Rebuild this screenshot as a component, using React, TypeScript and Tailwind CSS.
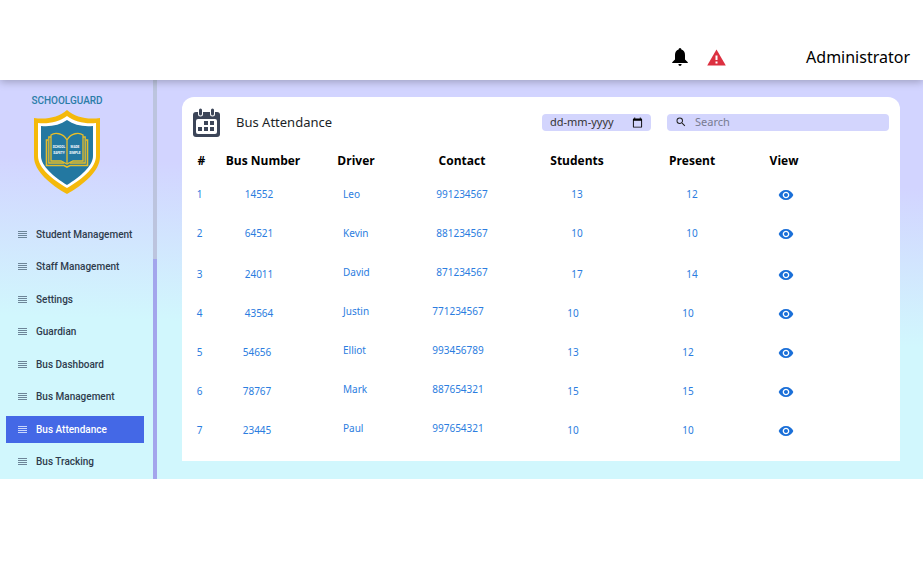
import React from "react";
import { MdCalendarToday, MdSearch, MdVisibility } from "react-icons/md";

type Row = {
  id: number;
  bus: string;
  driver: string;
  contact: string;
  students: number;
  present: number;
};

const rows: Row[] = [
  { id: 1, bus: "14552", driver: "Leo", contact: "991234567", students: 13, present: 12 },
  { id: 2, bus: "64521", driver: "Kevin", contact: "881234567", students: 10, present: 10 },
  { id: 3, bus: "24011", driver: "David", contact: "871234567", students: 17, present: 14 },
  { id: 4, bus: "43564", driver: "Justin", contact: "771234567", students: 10, present: 10 },
  { id: 5, bus: "54656", driver: "Elliot", contact: "993456789", students: 13, present: 12 },
  { id: 6, bus: "78767", driver: "Mark", contact: "887654321", students: 15, present: 15 },
  { id: 7, bus: "23445", driver: "Paul", contact: "997654321", students: 10, present: 10 },
];

const links = [
  "Student Management",
  "Staff Management",
  "Settings",
  "Guardian",
  "Bus Dashboard",
  "Bus Management",
  "Bus Attendance",
  "Bus Tracking",
];

function BellIcon() {
  return (
    <svg viewBox="0 0 16 18" className="h-[18px] w-4" aria-hidden="true">
      <path d="M8 0Q9.400 0 9.400 1.500Q13 2.600 13 7V11.500L15.800 14.200V15H.2V14.200L3 11.500V7Q3 2.600 6.600 1.500Q6.600 0 8 0Z" />
      <path d="M6.300 16H9.700Q9.400 18 8 18Q6.600 18 6.300 16Z" />
    </svg>
  );
}

function AlertIcon() {
  return (
    <svg viewBox="0 0 19 17" className="h-[17px] w-[19px]" aria-hidden="true">
      <path d="M9.500 .5L18.800 16.500H.2Z" fill="#dc3040" />
      <path d="M8.500 6.500H10.500V11H8.500ZM8.500 12.500H10.500V14.500H8.500Z" fill="#fff" />
    </svg>
  );
}

function LinesIcon() {
  return (
    <svg viewBox="0 0 9 7" className="h-[7px] w-[9px]" fill="currentColor" aria-hidden="true">
      <path d="M0 0H9V1H0ZM0 2H9V3H0ZM0 4H9V5H0ZM0 6H9V7H0Z" />
    </svg>
  );
}

function Shield() {
  return (
    <svg viewBox="0 0 66 84" className="h-[84px] w-[66px]" role="img" aria-label="School safety made simple">
      <path d="M33 0C25 7 13 10 0 8V47C0 61 17 75 33 84C49 75 66 61 66 47V8C53 10 41 7 33 0Z" fill="#f4b90b" />
      <path d="M33 6C25 12 15 14 4 13V46C4 58 19 70 33 78C47 70 62 58 62 46V13C51 14 41 12 33 6Z" fill="#fff" />
      <path d="M33 10C26 15 17 17 7 16V46C7 56 20 67 33 75C46 67 59 56 59 46V16C49 17 40 15 33 10Z" fill="#2378a1" />
      <g fill="none" stroke="#e6bd2a" strokeWidth="1.3">
        <path d="M33 30C29 23 21 22 17 25V51H27L33 54L39 51H49V25C45 22 37 23 33 30V53" />
        <path d="M17 27H14.800V53H30M49 27H51.200V53H36" />
        <path d="M14 30H12.500V55.500H30L33 57L36 55.500H53.500V30H52" strokeWidth="1.600" />
      </g>
      <g fill="#fff" fontFamily="Roboto, sans-serif" fontWeight="700" fontSize="3.200" textAnchor="middle">
        <text x="25" y="38">SCHOOL</text>
        <text x="25" y="44">SAFETY</text>
        <text x="41" y="38">MADE</text>
        <text x="41" y="44">SIMPLE</text>
      </g>
    </svg>
  );
}

function CalendarIcon() {
  return (
    <svg viewBox="0 0 27 29" className="h-[29px] w-[27px]" aria-hidden="true">
      <path d="M3 4H24Q27 4 27 7V26Q27 29 24 29H3Q0 29 0 26V7Q0 4 3 4Z" fill="#3c4558" />
      <g stroke="#fff" strokeWidth="5" strokeLinecap="round">
        <path d="M7.500 2V6M19.500 2V6" />
      </g>
      <g stroke="#3c4558" strokeWidth="3" strokeLinecap="round">
        <path d="M7.500 2V6M19.500 2V6" />
      </g>
      <rect x="3" y="11" width="21" height="15" rx="2" fill="#fff" />
      <path
        d="M11 13H15V17H11ZM17 13H21V17H17ZM5 19H9V23H5ZM11 19H15V23H11ZM17 19H21V23H17Z"
        fill="#3c4558"
      />
    </svg>
  );
}

function Sidebar() {
  return (
    <aside className="flex w-[157px] shrink-0">
      <div className="flex flex-1 flex-col pt-3 pb-1">
        <div className="flex w-[134px] flex-col items-center">
          <span className="font-[Roboto,sans-serif] text-[10px] leading-[18px] font-medium text-[#2b7da8]">
            SCHOOLGUARD
          </span>
          <Shield />
        </div>
        <nav className="mt-[27px] flex flex-1 flex-col justify-between pr-[9px] pl-1.5 font-[Roboto,sans-serif] text-[10px] font-medium">
          {links.map((label) => {
            const active = label === "Bus Attendance";
            return (
              <a
                key={label}
                href="#"
                aria-current={active ? "page" : undefined}
                className={
                  active
                    ? "flex h-[27px] items-center gap-[9px] bg-[#4468e6] pl-3 text-white"
                    : "flex h-[27px] items-center gap-[9px] pl-3 text-[#2f3c4d]"
                }
              >
                <span className={active ? "text-[#c9d6fb]" : "text-[#6d8598]"}>
                  <LinesIcon />
                </span>
                {label}
              </a>
            );
          })}
        </nav>
      </div>
      <div className="flex w-1 flex-col">
        <div className="h-[179px] bg-[#bcc4de]" />
        <div className="flex-1 bg-[#a3a5ec]" />
      </div>
    </aside>
  );
}

function AttendanceTable() {
  return (
    <table className="w-full table-fixed text-center">
      <colgroup>
        <col className="w-[39px]" />
        <col className="w-[84px]" />
        <col className="w-[102px]" />
        <col className="w-[110px]" />
        <col className="w-[120px]" />
        <col className="w-[110px]" />
        <col className="w-[74px]" />
      </colgroup>
      <thead>
        <tr className="h-7 font-['Open_Sans',sans-serif] text-xs font-bold text-black">
          <th>#</th>
          <th>Bus Number</th>
          <th>Driver</th>
          <th>Contact</th>
          <th>Students</th>
          <th>Present</th>
          <th>View</th>
        </tr>
      </thead>
      <tbody className="text-[10px] text-[#2b7de0]">
        {rows.map((r) => {
          const drop = r.id > 2 ? "pt-1" : "";
          const shift = r.id > 3 ? "pr-2" : "";
          return (
            <tr key={r.id} className="h-[39px]">
              <td className={`pr-1 ${drop}`}>{r.id}</td>
              <td className={r.id > 4 ? `pr-3 ${drop}` : `pr-2 ${drop}`}>{r.bus}</td>
              <td className="pl-[38px] text-left">{r.driver}</td>
              <td className={shift}>{r.contact}</td>
              <td className={`${shift} ${drop}`}>{r.students}</td>
              <td className={`${shift} ${drop}`}>{r.present}</td>
              <td className={r.id > 2 ? "pt-1 pl-1" : "pl-1"}>
                <button type="button" aria-label={`View bus ${r.bus}`} className="block w-full">
                  <MdVisibility className="mx-auto size-4 text-[#1a6fd8]" />
                </button>
              </td>
            </tr>
          );
        })}
      </tbody>
    </table>
  );
}

export default function App() {
  return (
    <div className="min-h-screen bg-white font-['Noto_Sans',sans-serif]">
      <header className="relative flex h-20 items-center justify-end bg-white pt-[34px] pr-[13px] shadow-[0_2px_8px_rgba(0,0,0,0.25)]">
        <button type="button" aria-label="Notifications" className="mr-[19px]">
          <BellIcon />
        </button>
        <button type="button" aria-label="Alerts" className="mr-20">
          <AlertIcon />
        </button>
        <span className="text-base text-black">Administrator</span>
      </header>
      <div className="flex bg-linear-[182deg] from-[#d2d4ff] from-25% to-[#d1f7fd] to-62%">
        <Sidebar />
        <main className="flex-1 pt-[17px] pr-[23px] pb-[18px] pl-[25px]">
          <section className="rounded-t-xl bg-white pb-[13px]">
            <div className="flex h-[50px] items-center px-[11px]">
              <CalendarIcon />
              <h1 className="ml-4 flex-1 pt-0.5 text-[13px] text-[#1b1f27]">Bus Attendance</h1>
              <div className="flex h-[17px] w-[109px] items-center rounded bg-[#d3d5fd] px-2">
                <input
                  aria-label="Date"
                  placeholder="dd-mm-yyyy"
                  className="w-full min-w-0 bg-transparent text-[11px] text-[#333] outline-none placeholder:text-[#333]"
                />
                <MdCalendarToday className="size-[11px] shrink-0 text-black" />
              </div>
              <label className="ml-4 flex h-[17px] w-[222px] items-center gap-2 rounded bg-[#d3d5fd] px-2">
                <MdSearch className="size-3 shrink-0 text-[#222]" />
                <input
                  type="search"
                  aria-label="Search"
                  placeholder="Search"
                  className="w-full min-w-0 bg-transparent text-[11px] outline-none placeholder:text-[#777b91]"
                />
              </label>
            </div>
            <div className="pr-[79px]">
              <AttendanceTable />
            </div>
          </section>
        </main>
      </div>
    </div>
  );
}
